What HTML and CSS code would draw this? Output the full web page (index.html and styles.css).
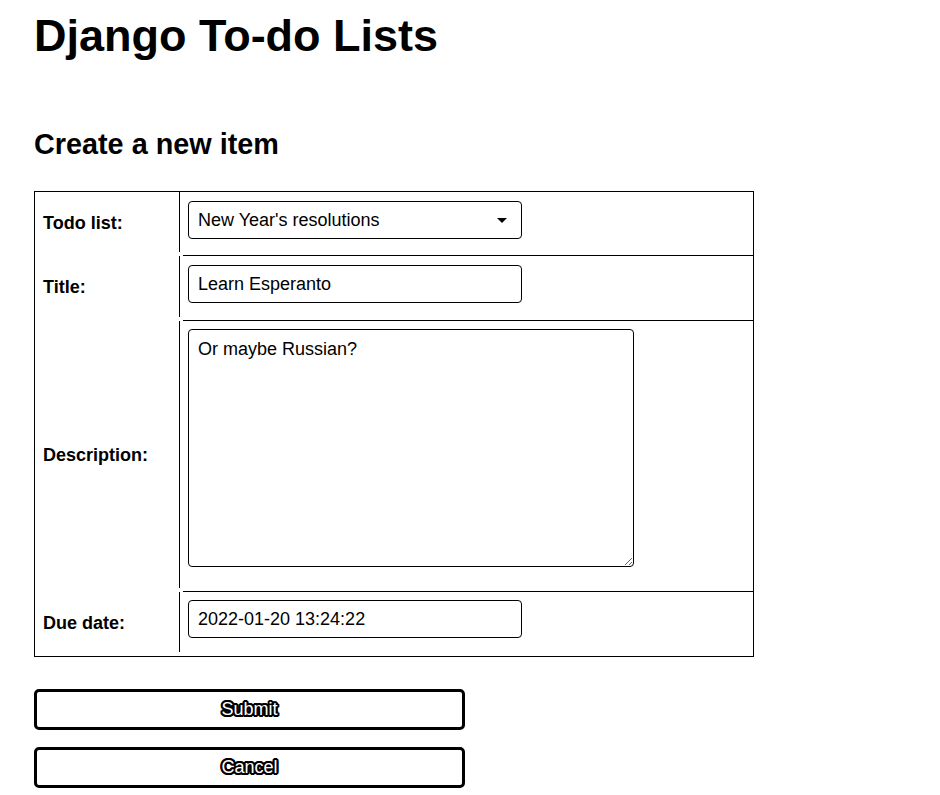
FILE: index.html
```html
<!DOCTYPE html>
<html lang="en">
<head>
<meta charset="utf-8">
<title>Django To-do Lists</title>
<link rel="stylesheet" href="styles.css">
</head>
<body>
<h1 class="title">Django To-do Lists</h1>
<h2 class="subtitle">Create a new item</h2>
<form class="item-form">
  <table class="form-table">
    <tr class="row-select">
      <th class="label-cell"><label for="id_todo_list">Todo list:</label></th>
      <td class="field-cell">
        <div class="select-wrap">
          <select id="id_todo_list" class="field field-select">
            <option>New Year's resolutions</option>
          </select>
        </div>
      </td>
    </tr>
    <tr class="row-title">
      <th class="label-cell"><label for="id_title">Title:</label></th>
      <td class="field-cell"><input id="id_title" class="field" type="text" value="Learn Esperanto"></td>
    </tr>
    <tr class="row-area">
      <th class="label-cell"><label for="id_description">Description:</label></th>
      <td class="field-cell"><textarea id="id_description" class="field field-area">Or maybe Russian?</textarea></td>
    </tr>
    <tr class="last-row">
      <th class="label-cell"><label for="id_due_date">Due date:</label></th>
      <td class="field-cell"><input id="id_due_date" class="field" type="text" value="2022-01-20 13:24:22"></td>
    </tr>
  </table>
  <div class="actions">
    <button type="submit" class="btn">Submit</button>
    <button type="button" class="btn">Cancel</button>
  </div>
</form>
</body>
</html>
```

FILE: styles.css
```css
html, body {
  background: #fff;
  color: #000;
}

body {
  margin: 0;
  padding: 0 34px;
  font-family: "Liberation Sans", Arial, sans-serif;
  font-size: 18px;
}

.title {
  margin: 11px 0 0;
  font-size: 45px;
  line-height: 50px;
  font-weight: bold;
}

.subtitle {
  margin: 67px 0 0;
  font-size: 28.8px;
  line-height: 33px;
  font-weight: bold;
}

.item-form {
  margin: 30px 0 0;
}

.form-table {
  width: 720px;
  border: 1px solid #000;
  border-collapse: separate;
  border-spacing: 0;
}

.label-cell {
  width: 145px;
  box-sizing: border-box;
  padding: 0 8px 2px;
  text-align: left;
  vertical-align: middle;
  font-size: 18px;
  font-weight: bold;
  background: linear-gradient(#000, #000) right top / 1px calc(100% - 4px) no-repeat;
}

.field-cell {
  padding: 9px 8px 17px;
  vertical-align: top;
  background: linear-gradient(#000, #000) right bottom / calc(100% - 3px) 1px no-repeat;
}

.row-title .field-cell {
  padding-bottom: 18px;
}

.row-area .field-cell {
  padding-top: 8px;
}

.last-row .field-cell {
  padding-top: 8px;
  padding-bottom: 18px;
  background: none;
}

.field {
  display: block;
  box-sizing: border-box;
  width: 334px;
  height: 38px;
  margin: 0;
  padding: 0 9px;
  border: 1px solid #000;
  border-radius: 4px;
  background: #fff;
  color: #000;
  font-family: "Liberation Sans", Arial, sans-serif;
  font-size: 18px;
  outline: none;
}

.select-wrap {
  position: relative;
  width: 334px;
}

.field-select {
  appearance: none;
  -webkit-appearance: none;
}

.select-wrap::after {
  content: "";
  position: absolute;
  right: 15px;
  top: 17px;
  border-left: 5px solid transparent;
  border-right: 5px solid transparent;
  border-top: 5px solid #000;
  pointer-events: none;
}

.field-area {
  width: 446px;
  height: 238px;
  padding: 9px;
  margin-bottom: 8px;
  line-height: normal;
  resize: both;
}

.actions {
  display: flex;
  flex-direction: column;
  gap: 17px;
  margin-top: 32px;
}

.btn {
  box-sizing: border-box;
  width: 431px;
  height: 41px;
  padding: 0;
  border: 3px solid #000;
  border-radius: 5px;
  background: #fff;
  color: #fff;
  font-family: "Liberation Sans", Arial, sans-serif;
  font-size: 18px;
  text-shadow:
    -2px 0 0 #000, 2px 0 0 #000, 0 -2px 0 #000, 0 2px 0 #000,
    -1px -1px 0 #000, 1px -1px 0 #000, -1px 1px 0 #000, 1px 1px 0 #000,
    -2px -1px 0 #000, 2px -1px 0 #000, -2px 1px 0 #000, 2px 1px 0 #000,
    -1px -2px 0 #000, 1px -2px 0 #000, -1px 2px 0 #000, 1px 2px 0 #000;
  cursor: pointer;
}
```
